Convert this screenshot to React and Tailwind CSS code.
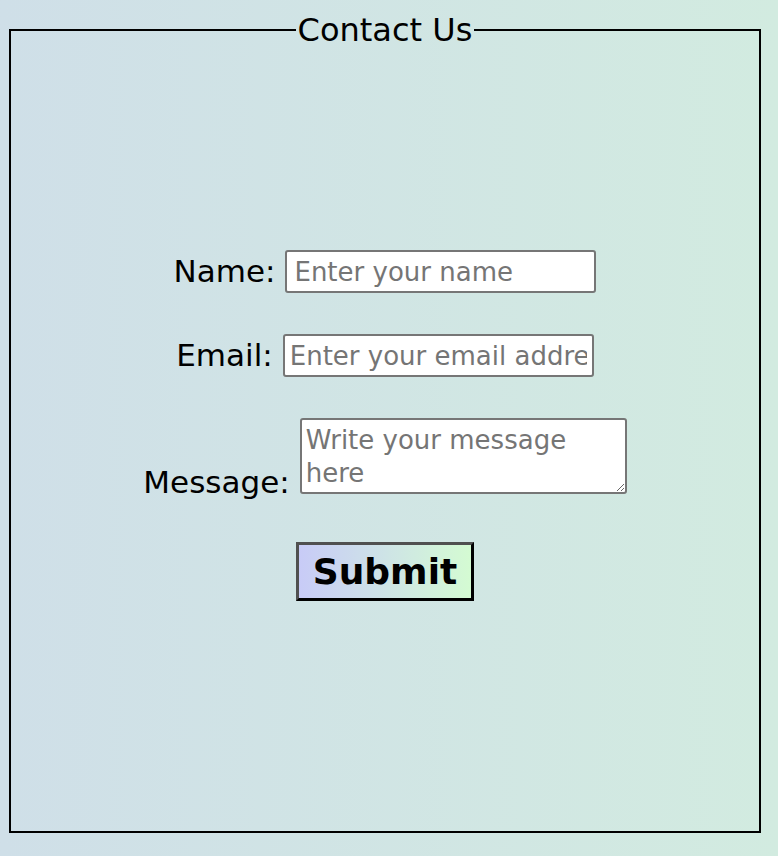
export default function App() {
  return (
    <div className="min-h-[856px] w-full bg-gradient-to-r from-[#cfdfe8] to-[#d2ebe0] pt-[12px] font-['DejaVu_Sans',sans-serif] text-black">
      <fieldset className="ml-[9px] h-[821px] w-[752px] border-2 border-black">
        <legend className="mx-auto px-[2px] text-[32px] leading-[36px]">Contact Us</legend>
        <form className="flex flex-col items-center pt-[202px]" onSubmit={(e) => e.preventDefault()}>
          <div className="flex h-[43px] items-center gap-[10px]">
            <label htmlFor="name" className="text-[31px] leading-none">Name:</label>
            <input
              id="name"
              type="text"
              placeholder="Enter your name"
              className="h-[43px] w-[311px] rounded-[3px] border-2 border-[#767676] bg-white px-[7px] text-[26px] placeholder:text-[#757575] outline-none"
            />
          </div>
          <div className="mt-[41px] flex h-[43px] items-center gap-[10px]">
            <label htmlFor="email" className="text-[31px] leading-none">Email:</label>
            <input
              id="email"
              type="email"
              placeholder="Enter your email address"
              className="h-[43px] w-[311px] rounded-[3px] border-2 border-[#767676] bg-white px-[5px] text-[26px] placeholder:text-[#757575] outline-none"
            />
          </div>
          <div className="mt-[41px] flex items-end gap-[10px]">
            <label htmlFor="message" className="mb-[-4px] text-[31px] leading-none">Message:</label>
            <textarea
              id="message"
              placeholder="Write your message here"
              className="block h-[76px] w-[327px] rounded-[3px] border-2 border-[#767676] bg-white px-[4px] pt-[4px] pb-0 text-[26px] leading-[33px] placeholder:text-[#757575] outline-none"
            />
          </div>
          <button
            type="submit"
            className="mt-[48px] h-[59px] w-[178px] border-[3px] border-t-[#505050] border-l-[#505050] border-b-black border-r-black bg-gradient-to-r from-[#c8cbf7] to-[#d4fbd2] text-[36px] font-bold leading-none"
          >
            Submit
          </button>
        </form>
      </fieldset>
    </div>
  );
}
